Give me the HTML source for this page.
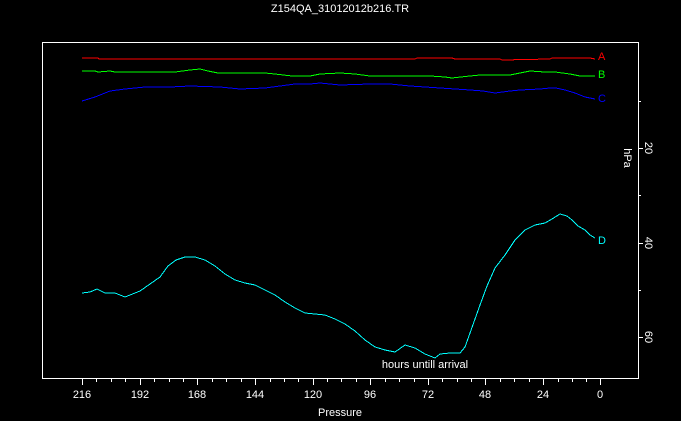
<!DOCTYPE html>
<html><head><meta charset="utf-8"><style>
html,body{margin:0;padding:0;background:#000;width:681px;height:421px;overflow:hidden}
svg{display:block}
text{font-family:"Liberation Sans",sans-serif;font-size:11px;fill:#fff}
</style></head><body>
<svg width="681" height="421" xmlns="http://www.w3.org/2000/svg" shape-rendering="crispEdges">
<text x="340" y="12" text-anchor="middle">Z154QA_31012012b216.TR</text>
<rect x="42.5" y="42.5" width="596" height="336" fill="none" stroke="#fff" stroke-width="1"/>
<g stroke="#fff" stroke-width="1">
<path d="M82.5 378v7M140.5 378v7M197.5 378v7M255.5 378v7M313.5 378v7M370.5 378v7M428.5 378v7M485.5 378v7M543.5 378v7M600.5 378v7"/>
<path d="M96.5 378v4M111.5 378v4M125.5 378v4M154.5 378v4M169.5 378v4M183.5 378v4M212.5 378v4M226.5 378v4M241.5 378v4M270.5 378v4M284.5 378v4M298.5 378v4M327.5 378v4M341.5 378v4M356.5 378v4M385.5 378v4M399.5 378v4M414.5 378v4M442.5 378v4M457.5 378v4M471.5 378v4M500.5 378v4M514.5 378v4M529.5 378v4M558.5 378v4M572.5 378v4M586.5 378v4"/>
<path d="M638 148.5h5M638 243.5h5M638 337.5h5M638 101.5h3M638 195.5h3M638 290.5h3"/>
</g>
<g text-anchor="middle">
<text x="82" y="398">216</text><text x="140" y="398">192</text><text x="197" y="398">168</text><text x="255" y="398">144</text><text x="313" y="398">120</text><text x="370" y="398">96</text><text x="428" y="398">72</text><text x="485" y="398">48</text><text x="543" y="398">24</text><text x="600" y="398">0</text>
<text x="340" y="416">Pressure</text>
<text x="425" y="368">hours untill arrival</text>
</g>
<text transform="translate(645,148) rotate(90)" text-anchor="middle">20</text>
<text transform="translate(645,243) rotate(90)" text-anchor="middle">40</text>
<text transform="translate(645,337) rotate(90)" text-anchor="middle">60</text>
<text transform="translate(624,158) rotate(90)" text-anchor="middle">hPa</text>
<g fill="none" stroke-width="1">
<polyline stroke="#f00" points="82,58 98,58 99,59 415,59 417,58 452,58 455,59 460,59 500,59 502,60 550,59 552,58 590,58 595,59"/>
<polyline stroke="#0f0" points="82,71 95,71 98,72 110,71 115,72 175,72 190,70 200,69 208,71 218,73 265,73 275,74 292,76 310,76 320,74 340,73 355,74 370,76 400,76 430,76 445,77 452,78 470,76 480,75 510,75 520,73 530,71 545,72 555,72 570,74 580,76 595,76"/>
<polyline stroke="#00f" points="82,101 95,97 110,91 125,89 145,87 170,87 190,86 220,87 240,89 265,88 280,86 295,84 310,84 320,83 340,85 370,84 390,84 410,86 440,88 470,90 483,91 495,93 510,91 520,90 540,89 550,88 556,88 565,90 575,93 585,97 595,99"/>
<polyline stroke="#0ff" points="82,293 90,292 97,289 105,293 115,293 125,297 140,291 150,284 160,277 168,266 176,260 185,257 195,257 205,260 215,266 225,274 235,280 245,283 255,285 265,290 275,295 285,302 295,308 305,313 315,314 325,315 335,319 345,324 355,331 365,340 375,347 385,350 395,352 405,345 415,348 425,354 435,358 440,354 450,353 460,353 465,347 470,333 475,319 480,305 487,286 495,268 505,255 515,240 525,230 535,225 545,223 552,219 560,214 567,216 572,220 578,226 585,230 590,235 595,238"/>
</g>
<g font-size="11">
<text x="598" y="60" style="fill:#f00">A</text>
<text x="598" y="78" style="fill:#0f0">B</text>
<text x="598" y="102" style="fill:#00f">C</text>
<text x="598" y="244" style="fill:#0ff">D</text>
</g>
</svg>
</body></html>
